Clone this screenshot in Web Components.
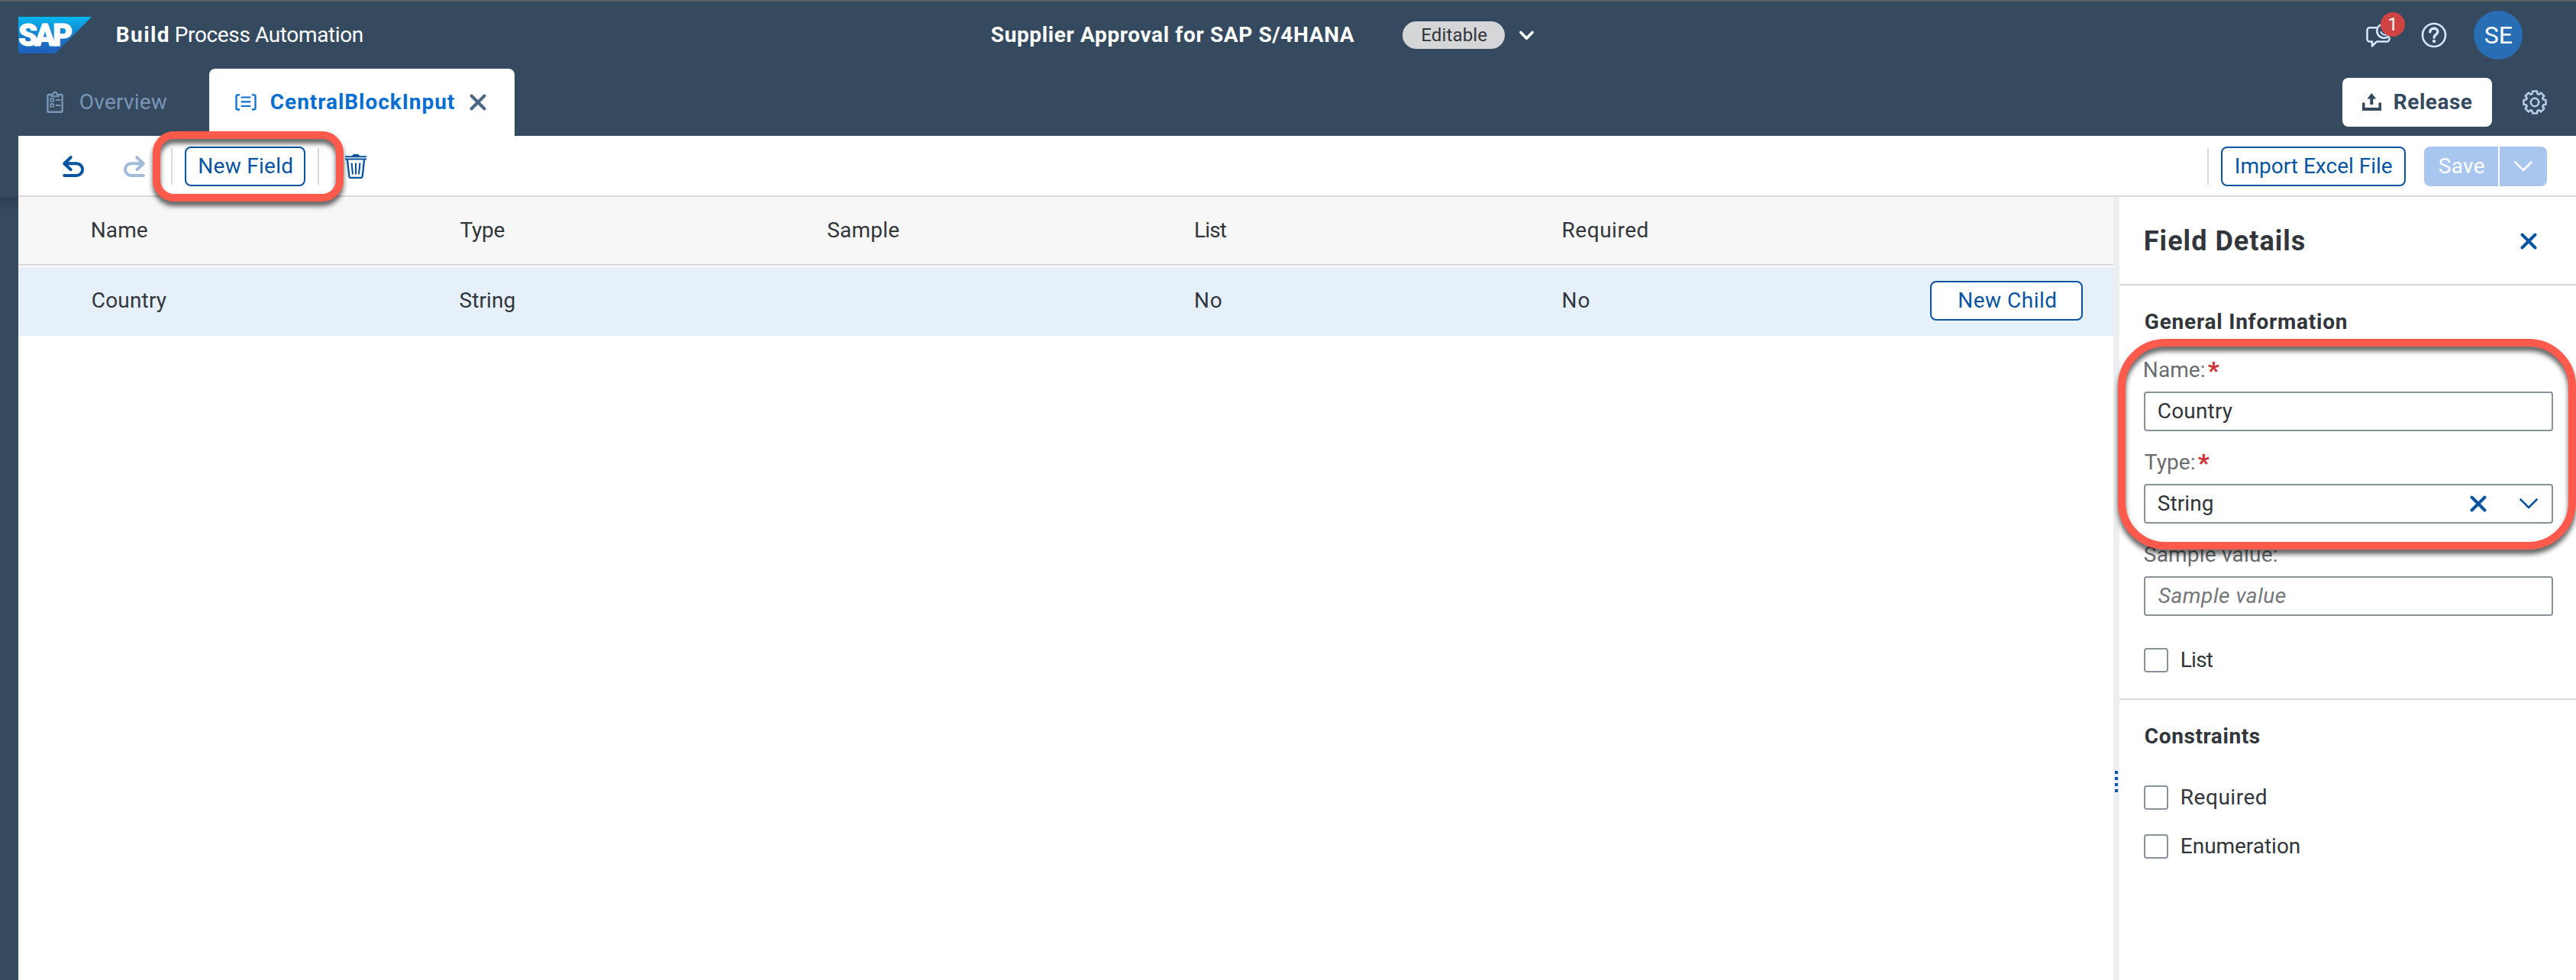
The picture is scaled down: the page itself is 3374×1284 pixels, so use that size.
<!DOCTYPE html>
<html lang="en">
<head>
<meta charset="utf-8">
<title>Build Process Automation</title>
<style>
html,body{margin:0;height:100%;overflow:hidden;background:#fff;font-family:Roboto,"Open Sans",sans-serif;font-size:28px;color:#32363a}
</style>
</head>
<body>
<process-app></process-app>
<script>
const define = (name, html, setup) => {
  const t = document.createElement('template');
  t.innerHTML = html;
  customElements.define(name, class extends HTMLElement {
    connectedCallback() {
      if (this.shadowRoot) return;
      this.attachShadow({mode: 'open'}).append(t.content.cloneNode(true));
      if (setup) setup(this, this.shadowRoot);
    }
  });
};

/* Single-line label whose inked width is given by the "w" attribute. */
define('ui-text', `<style>:host{display:inline-block;white-space:nowrap;line-height:34px;flex:none}span{display:block}</style><span><slot></slot></span>`, (el, root) => {
  const w = parseFloat(el.getAttribute('w'));
  const cs = getComputedStyle(el);
  const ctx = document.createElement('canvas').getContext('2d');
  ctx.font = `${cs.fontStyle} ${cs.fontWeight} ${cs.fontSize} ${cs.fontFamily}`;
  const text = el.textContent;
  const m = ctx.measureText(text);
  const ink = m.actualBoundingBoxLeft + m.actualBoundingBoxRight;
  const s = root.querySelector('span').style;
  if (text.length > 1) s.letterSpacing = ((w - ink) / (text.length - 1)).toFixed(3) + 'px';
  s.marginLeft = (m.actualBoundingBoxLeft + 0.8).toFixed(2) + 'px';
  el.style.width = w + 'px';
});

const gear = () => {
  const p = [];
  for (let i = 0; i < 8; i++) {
    const a = i * Math.PI / 4;
    for (const [d, r] of [[-.30, 11.6], [-.2, 14.8], [.2, 14.8], [.30, 11.6]])
      p.push((17 + r * Math.sin(a + d)).toFixed(2) + ' ' + (17 - r * Math.cos(a + d)).toFixed(2));
  }
  return 'M' + p.join('L') + 'Z';
};
const line = (w) => `fill="none" stroke="currentColor" stroke-width="${w}" stroke-linecap="round" stroke-linejoin="round"`;
const ICONS = {
  clipboard: [22, 30, `<g ${line(2.4)}><path d="M7 5H3a1.6 1.6 0 0 0-1.6 1.6V26.200a1.600 1.600 0 0 0 1.600 1.600h16a1.600 1.600 0 0 0 1.600-1.600V6.600A1.600 1.600 0 0 0 19 5h-4"/><path d="M6.400 7.300V5.600L8.600 4.600C8.600 .700 13.400 .700 13.400 4.600L15.600 5.600V7.300Z" stroke-width="2"/></g><g fill="none" stroke="currentColor" stroke-width="1.700"><path d="M5.200 10.200h3.800v3.800h-3.800zM5.200 17.200h3.800v3.800h-3.800z"/><path d="M11.800 12.100h6.400M11.800 19.100h6.400" stroke-width="2"/></g>`],
  fields: [28, 22, `<g ${line(2.3)}><path d="M5.200 1.400H3A1.500 1.500 0 0 0 1.500 2.900V19a1.500 1.500 0 0 0 1.500 1.500H5.200M22.800 1.400H25A1.500 1.500 0 0 1 26.500 2.900V19a1.500 1.500 0 0 1-1.500 1.500H22.800"/><path d="M8.500 4.500H19.500M8.500 10.300H19.500M8.500 16H19.500" stroke-width="2.200"/></g>`],
  undo: [28, 28, `<g ${line(4)}><path d="M10.700 2.200L2.200 10.200L10.700 18.200M3 10.200H18.200a7.900 7.900 0 0 1 0 15.800H2.200"/></g>`],
  redo: [28, 28, `<g ${line(4)}><path d="M17.300 2.200L25.800 10.200L17.300 18.200M25 10.200H9.800a7.900 7.900 0 0 0 0 15.800H25.800"/></g>`],
  trash: [28, 32, `<path d="M9 2.200Q10 0 12 0h4Q18 0 19 2.200H28V4.200H0V2.200zM0 5.600H28V7.600H0z" fill="currentColor"/><g ${line(2.3)}><path d="M3 8L5.400 29.600Q5.600 30.800 6.600 30.800H21.400Q22.400 30.800 22.600 29.600L25 8"/></g><path d="M8.600 11.500L10 26.500M14 11.500V26.500M19.400 11.500L18 26.500" fill="none" stroke="currentColor" stroke-width="2.100"/>`],
  chat: [32, 32, `<g ${line(2.5)}><path d="M13.500 6.200H4.800A3.300 3.300 0 0 0 1.500 9.500V21.300A3.300 3.300 0 0 0 4.800 24.600H8V30.500L13.800 24.600H27.200A3.300 3.300 0 0 0 30.500 21.300V19.500"/><path d="M19 2.500A9.200 9.200 0 1 0 29.500 17.500"/><path d="M19.500 12A6.500 6.500 0 0 0 27 15.500" stroke-width="2"/></g>`],
  help: [34, 34, `<g ${line(2.6)}><circle cx="17" cy="17" r="15"/><path d="M11.800 12.800C12.200 6.800 21.800 6.700 21.900 12.500C22 16.400 17.300 15.900 17.100 20" stroke-width="3.400"/></g><circle cx="17.100" cy="25" r="2.200" fill="currentColor"/>`],
  gear: [34, 34, `<g ${line(2.6)}><path d="${gear()}"/><circle cx="17" cy="17" r="5.200"/></g>`],
  upload: [25, 24, `<path d="M0 12.500H3.500V19H21.500V12.500H25V23H0zM12.300 0L18.300 7.500H14.300V15H10.300V7.500H6.300z" fill="currentColor"/>`],
  cross: [22, 22, `<g ${line(4)}><path d="M2.500 2.500L19.500 19.500M19.500 2.500L2.500 19.500"/></g>`],
  down: [24, 14, `<g ${line(2.6)}><path d="M1.500 1.500L12 12L22.500 1.500"/></g>`],
  downbold: [19, 13, `<g ${line(3.6)}><path d="M2 2.400L9.500 10.200L17 2.400"/></g>`]
};
define('ui-icon', `<style>:host{display:block;flex:none}svg{display:block;overflow:visible}</style>`, (el, root) => {
  const [w, h, body] = ICONS[el.getAttribute('name')];
  root.innerHTML += `<svg width="${w}" height="${h}" viewBox="0 0 ${w} ${h}">${body}</svg>`;
});

define('sap-logo', `<style>:host{display:block;flex:none}svg{display:block}</style>
<svg width="96" height="48" viewBox="0 0 96 48"><defs><linearGradient id="g" x1="0" y1="0" x2="0" y2="1"><stop offset="0" stop-color="#05b8f1"/><stop offset=".25" stop-color="#0f9ade"/><stop offset=".6" stop-color="#1a74c8"/><stop offset="1" stop-color="#1e5fbb"/></linearGradient></defs>
<path d="M0 0H96L48.500 48H0Z" fill="url(#g)"/><text x="0" y="38" font-family="Roboto,sans-serif" font-weight="900" font-size="40" fill="#fff" stroke="#fff" stroke-width="1" textLength="71" lengthAdjust="spacing">SAP</text></svg>`);

define('ui-button', `<style>:host{display:flex;box-sizing:border-box;height:52px;align-items:center;justify-content:center;border:2px solid #0854a0;border-radius:8px;background:#fff;color:#0854a0;flex:none}</style><slot></slot>`);

define('shell-bar', `<style>
:host{display:flex;box-sizing:border-box;height:90px;border-top:2px solid #5e5f61;background:#354a5f;color:#fff;align-items:center;padding:0 70px 0 24px;flex:none}
.b{font-weight:700;margin-left:32px}.p{margin-left:10px}.t{font-weight:700;margin-left:823px}
.pill{display:flex;align-items:center;justify-content:center;margin-left:64px;width:134px;height:36px;border-radius:18px;background:#d5d6d8;color:#32363a;font-size:24px}
.dn{margin-left:19px}.r{margin-left:auto;display:flex;align-items:center;color:#d1e8ff}
.chat{position:relative}.badge{position:absolute;left:19px;top:-14px;width:32px;height:32px;border-radius:50%;background:#d04343;color:#fff;font-size:24px;display:flex;align-items:center;justify-content:center}
.help{margin-left:40px}.av{margin-left:35px;width:64px;height:64px;border-radius:50%;background:#286eb4;color:#fff;font-size:32px;display:flex;align-items:center;justify-content:center}
</style>
<sap-logo></sap-logo><ui-text class="b" w="68">Build</ui-text><ui-text class="p" w="244">Process Automation</ui-text>
<ui-text class="t" w="476">Supplier Approval for SAP S/4HANA</ui-text>
<div class="pill"><ui-text w="85">Editable</ui-text></div><ui-icon class="dn" name="downbold"></ui-icon>
<div class="r"><div class="chat"><ui-icon name="chat"></ui-icon><div class="badge"><ui-text w="11">1</ui-text></div></div><ui-icon class="help" name="help"></ui-icon><div class="av"><ui-text w="36">SE</ui-text></div></div>`);

define('tab-strip', `<style>
:host{display:flex;height:88px;background:#354a5f;align-items:center;padding:0 37px 0 61px;flex:none}
.o{display:flex;align-items:center;gap:21px;color:#7996b6}
.a{display:flex;align-items:center;box-sizing:border-box;align-self:stretch;width:400px;margin-left:56px;padding-left:34px;background:#fff;border-radius:8px 8px 0 0;color:#0a6ed1;font-weight:700}
.a ui-text{margin-left:18px}.x{margin-left:21px;color:#4a6788}
.rel{display:flex;align-items:center;width:196px;height:64px;box-sizing:border-box;margin-left:auto;padding-left:26px;background:#fff;border-radius:8px;color:#354a5f;font-weight:700}.rel ui-text{margin-left:16px}
.g{margin-left:39px;color:#b5cee8}
</style>
<div class="o"><ui-icon name="clipboard"></ui-icon><ui-text w="114">Overview</ui-text></div>
<div class="a"><ui-icon name="fields"></ui-icon><ui-text w="240">CentralBlockInput</ui-text><ui-icon class="x" name="cross"></ui-icon></div>
<div class="rel"><ui-icon name="upload"></ui-icon><ui-text w="102">Release</ui-text></div><ui-icon class="g" name="gear"></ui-icon>`);

define('tool-bar', `<style>
:host{display:flex;box-sizing:border-box;height:80px;border-bottom:2px solid #d9d9d9;background:#fff;align-items:center;padding:1px 38px 0 58px;margin-left:24px;flex:none;color:#0854a0}
.redo{margin-left:52px;color:#a2bbdb}.s{width:2px;height:48px;background:#d9d9d9}
.s1{margin-left:34px}.nf{width:158px;margin-left:16px}.s2{margin-left:16px}.tr{margin-left:34px}
.s3{margin-left:auto}.im{width:242px;margin-left:16px}
.sv{display:flex;gap:2px;margin-left:24px;color:#fff}.sv div{display:flex;align-items:center;justify-content:center;height:52px;background:#a9c6ef}
.l{width:97px;border-radius:8px 0 0 8px}.r{width:62px;border-radius:0 8px 8px 0}
</style>
<ui-icon name="undo"></ui-icon><ui-icon class="redo" name="redo"></ui-icon><div class="s s1"></div><ui-button class="nf"><ui-text w="121">New Field</ui-text></ui-button><div class="s s2"></div><ui-icon class="tr" name="trash"></ui-icon>
<div class="s s3"></div><ui-button class="im"><ui-text w="204">Import Excel File</ui-text></ui-button><div class="sv"><div class="l"><ui-text w="59">Save</ui-text></div><div class="r"><ui-icon name="down"></ui-icon></div></div>`);

define('field-table', `<style>
:host{display:block;flex:1;min-width:0;background:#fff}
.h,.r{display:flex;align-items:center;box-sizing:border-box;height:90px;padding:0 40px 0 96px}
.h{background:#f7f7f7;border-bottom:2px solid #d9d9d9;margin-bottom:2px}
.r{background:#e5f0fa;padding-bottom:2px}.c{width:481.700px;flex:none}
ui-button{width:200px;margin-left:auto}
</style>
<div class="h"><div class="c"><ui-text w="72">Name</ui-text></div><div class="c"><ui-text w="58">Type</ui-text></div><div class="c"><ui-text w="93">Sample</ui-text></div><div class="c"><ui-text w="41">List</ui-text></div><div class="c"><ui-text w="110">Required</ui-text></div></div>
<div class="r"><div class="c"><ui-text w="97">Country</ui-text></div><div class="c"><ui-text w="71">String</ui-text></div><div class="c"></div><div class="c"><ui-text w="34">No</ui-text></div><div class="c"><ui-text w="34">No</ui-text></div><ui-button><ui-text w="126">New Child</ui-text></ui-button></div>`);

define('split-grip', `<style>
:host{display:flex;flex-direction:column;gap:4px;align-items:center;box-sizing:border-box;width:8px;padding-top:752px;background:#eceef0;flex:none}
i{width:4px;height:4px;background:#0854a0}</style><i></i><i></i><i></i><i></i>`);

define('ui-field', `<style>
:host{display:block}.l{display:flex;height:34px;color:#6a6d70}.q{color:#cc3535;font-weight:900;margin-left:5px;font-size:32px}
.i{display:flex;align-items:center;box-sizing:border-box;height:52px;margin-top:11px;border:2px solid #89919a;border-radius:4px;padding:0 18px 0 16px}
.x{display:none;margin-left:auto;color:#0854a0;gap:43px;align-items:center}:host([combo]) .x{display:flex}:host(:not([required])) .q{display:none}
</style><div class="l"><slot name="label"></slot><ui-text class="q" w="12">*</ui-text></div><div class="i"><slot></slot><div class="x"><ui-icon name="cross"></ui-icon><ui-icon name="down"></ui-icon></div></div>`);

define('ui-check', `<style>:host{display:flex;align-items:center;gap:17px;height:32px}i{box-sizing:border-box;width:32px;height:32px;border:2px solid #89919a;border-radius:4px}</style><i></i><slot></slot>`);

define('field-details', `<style>
:host{display:block;width:598px;flex:none;background:#fff}
.h{display:flex;box-sizing:border-box;height:116px;align-items:center;justify-content:space-between;border-bottom:2px solid #d9d9d9;padding:1px 51px 0 33px;font-size:36px;font-weight:700}
.h ui-icon{color:#0854a0}
.s{padding:0 30px 0 32px}.t{font-weight:700;margin-left:1px;display:block}
.f1{margin-top:29px}.f2,.f3{margin-top:24px}.ph{font-style:italic;color:#74777a}
.s1{box-sizing:border-box;height:543px;padding-top:31px;border-bottom:2px solid #d9d9d9}.s2{padding-top:31px}
</style>
<div class="h"><ui-text w="209">Field Details</ui-text><ui-icon name="cross"></ui-icon></div>
<div class="s s1"><ui-text class="t" w="264">General Information</ui-text>
<ui-field class="f1" required><ui-text slot="label" w="78">Name:</ui-text><ui-text w="97">Country</ui-text></ui-field>
<ui-field class="f2" required combo><ui-text slot="label" w="65">Type:</ui-text><ui-text w="71">String</ui-text></ui-field>
<ui-field class="f3"><ui-text slot="label" w="173">Sample value:</ui-text><ui-text class="ph" w="167">Sample value</ui-text></ui-field>
<ui-check style="margin-top:42px"><ui-text w="41">List</ui-text></ui-check></div>
<div class="s s2"><ui-text class="t" w="150">Constraints</ui-text>
<ui-check style="margin-top:47px"><ui-text w="110">Required</ui-text></ui-check>
<ui-check style="margin-top:32px"><ui-text w="154">Enumeration</ui-text></ui-check></div>`);

/* Red callout frame floating over the page. */
define('callout-frame', `<style>:host{position:absolute;box-sizing:border-box;border:10px solid #ff5a4b;filter:drop-shadow(0 6px 3px rgba(0,0,0,.62));pointer-events:none}</style>`);

define('process-app', `<style>
:host{position:relative;display:flex;flex-direction:column;width:3374px;height:1284px;overflow:hidden;background:linear-gradient(90deg,#354a5f 24px,#fff 24px)}
main{display:flex;flex:1;min-height:0}
aside{width:24px;flex:none;background:linear-gradient(#2c3e50,#354a5f 18px)}
.a{left:200px;top:172px;width:250px;height:92px;border-radius:28px}
.b{left:2774px;top:444px;width:600px;height:276px;border-radius:62px}
</style>
<shell-bar></shell-bar><tab-strip></tab-strip><tool-bar></tool-bar>
<main><aside></aside><field-table></field-table><split-grip></split-grip><field-details></field-details></main>
<callout-frame class="a"></callout-frame><callout-frame class="b"></callout-frame>`);
</script>
</body>
</html>
